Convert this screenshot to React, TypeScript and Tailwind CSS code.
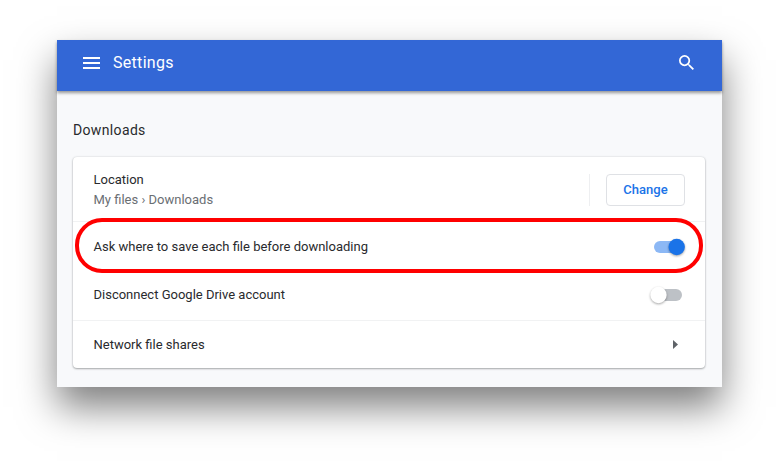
import React from "react";

function Toggle({ on = false }: { on?: boolean }) {
  return (
    <span className="flex h-4 w-8 items-center">
      <svg width="40" height="24" viewBox="0 0 40 24" className="-mx-1 shrink-0 overflow-visible">
        <rect x="5" y="6" width="28" height="12" rx="6" fill={on ? "#8cb8f5" : "#bdc1c6"} />
        <circle
          cx={on ? 27.7 : 9.5}
          cy="12"
          r="8.2"
          fill={on ? "#1a73e8" : "#ffffff"}
          className="drop-shadow-[0_1px_1px_rgba(0,0,0,0.35)]"
        />
      </svg>
    </span>
  );
}

export default function App() {
  return (
    <div className="h-[462px] w-[780px] overflow-hidden bg-white pt-10 pl-[57px] font-['Roboto',sans-serif] text-[13px] text-[#292a2d]">
      <main className="flex h-[347px] w-[665px] flex-col bg-[#f8f9fb] shadow-[0_20px_36px_rgba(0,0,0,0.5)]">
        <header className="relative flex h-[51px] shrink-0 items-center bg-[#3367d6] pr-7 pb-[5px] pl-[26px] text-white shadow-[0_2px_3px_rgba(0,0,0,0.4)]">
          <svg width="17" height="12" viewBox="0 0 17 12" fill="currentColor" className="-ml-[0.4px]">
            <path d="M0 0h17v2H0zM0 5h17v2H0zM0 10h17v2H0z" />
          </svg>
          <h1 className="ml-[13.4px] text-base tracking-[0.3px]">Settings</h1>
          <svg width="15" height="15" viewBox="3 3 17.5 17.5" fill="currentColor" className="mb-px ml-auto">
            <path d="M15.5 14h-.79l-.28-.27A6.47 6.47 0 0 0 16 9.5 6.5 6.5 0 1 0 9.5 16c1.61 0 3.09-.59 4.23-1.57l.27.28v.79l5 4.99L20.49 19l-4.99-5zm-6 0C7.01 14 5 11.99 5 9.5S7.01 5 9.5 5 14 7.01 14 9.5 11.99 14 9.5 14z" />
          </svg>
        </header>
        <h2 className="mt-[29px] ml-4 h-[37px] text-sm leading-5 tracking-[0.35px]">Downloads</h2>
        <section className="mx-4 h-[210.5px] w-[632px] rounded-[4px] bg-white shadow-[0_1px_2px_rgba(60,64,67,0.4),0_0_2px_rgba(60,64,67,0.2)]">
          <div className="flex h-[65px] items-center border-b border-[#f1f2f3] pt-px pr-5 pl-[20.5px]">
            <div className="pt-px leading-5">
              <div>Location</div>
              <div className="text-[#6a6e73]">My files › Downloads</div>
            </div>
            <div className="ml-auto h-8 w-px bg-[#eeeff1]" />
            <button className="ml-4 h-8 w-[79px] rounded-[4px] border border-[#dfe1e5] pt-px font-medium text-[#1a73e8]">Change</button>
          </div>
          <div className="relative flex h-[49px] items-center justify-between pr-5 pl-[20.5px]">
            <span>Ask where to save each file before downloading</span>
            <Toggle on />
            <div className="absolute -top-1 left-[2px] h-[55px] w-[628px] rounded-[27px] border-4 border-[#ff0000]" />
          </div>
          <div className="flex h-[50px] items-center justify-between border-b border-[#f1f2f3] pr-5 pb-px pl-[20.5px]">
            <span>Disconnect Google Drive account</span>
            <Toggle />
          </div>
          <div className="flex h-[47px] items-center justify-between pr-[27px] pl-[20.5px]">
            <span>Network file shares</span>
            <svg width="5" height="9" viewBox="0 0 5 9" fill="#5f6368">
              <path d="M0 0l5 4.5L0 9z" />
            </svg>
          </div>
        </section>
      </main>
    </div>
  );
}
